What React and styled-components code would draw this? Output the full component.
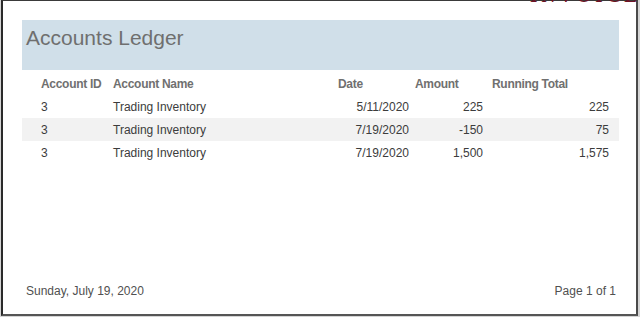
import React from "react";
import styled, { createGlobalStyle } from "styled-components";

const GlobalStyle = createGlobalStyle`
  html, body {
    margin: 0;
    padding: 0;
    background: #d4d4d4;
  }
  body {
    font-family: "Liberation Sans", Arial, sans-serif;
  }
`;

const Page = styled.div`
  position: relative;
  width: 640px;
  height: 317px;
  overflow: hidden;
  background: #d4d4d4;
`;

const Sheet = styled.div`
  box-sizing: border-box;
  margin-left: 1px;
  width: 637px;
  height: 316px;
  background: #ffffff;
  border-left: 2px solid #2a2a2a;
  border-top: 1px solid #3a3a3a;
  border-right: 2px solid #4a4a4a;
  border-bottom: 2px solid #555555;
  padding: 19px 17px 0 19px;
  display: flex;
  flex-direction: column;
`;

// the clipped red caption peeking over the top edge
const TopClip = styled.div`
  position: absolute;
  top: 0;
  left: 530px;
  width: 106px;
  height: 3px;
  overflow: hidden;
`;

const TopText = styled.span`
  position: absolute;
  top: -15px;
  left: 0;
  font-family: "Liberation Serif", serif;
  font-size: 19px;
  font-weight: bold;
  letter-spacing: 4px;
  color: #6e1426;
  white-space: nowrap;
`;

const Band = styled.div`
  height: 50px;
  background: #d0dfe9;
  display: flex;
  align-items: flex-start;
  padding: 4px 0 0 4px;
  box-sizing: border-box;
`;

const Title = styled.h1`
  margin: 0;
  font-size: 21px;
  font-weight: normal;
  color: #6f6f6f;
  line-height: 28px;
`;

const Table = styled.div`
  margin-top: 2px;
  display: flex;
  flex-direction: column;
`;

const Row = styled.div`
  display: grid;
  grid-template-columns: 72px 225px 77px 77px 117px;
  padding-left: 19px;
  height: 23px;
  align-items: center;
  background: ${(p) => (p.$shade ? "#f2f2f2" : "transparent")};
`;

const HeadCell = styled.div`
  font-size: 12px;
  font-weight: bold;
  color: #707070;
  letter-spacing: -0.3px;
  white-space: nowrap;
`;

const Cell = styled.div`
  font-size: 12px;
  color: #3c3c3c;
  white-space: nowrap;
  text-align: ${(p) => (p.$right ? "right" : "left")};
  padding-right: ${(p) => p.$pr || 0}px;
`;

const Footer = styled.div`
  margin-top: auto;
  display: flex;
  justify-content: space-between;
  padding: 0 3px 16px 4px;
  font-size: 12px;
  color: #505050;
  line-height: 14px;
`;

const rows = [
  { id: 3, name: "Trading Inventory", date: "5/11/2020", amount: "225", total: "225" },
  { id: 3, name: "Trading Inventory", date: "7/19/2020", amount: "-150", total: "75" },
  { id: 3, name: "Trading Inventory", date: "7/19/2020", amount: "1,500", total: "1,575" },
];

export default function App() {
  return (
    <Page>
      <GlobalStyle />
      <Sheet>
        <Band>
          <Title>Accounts Ledger</Title>
        </Band>
        <Table>
          <Row>
            <HeadCell>Account ID</HeadCell>
            <HeadCell>Account Name</HeadCell>
            <HeadCell>Date</HeadCell>
            <HeadCell>Amount</HeadCell>
            <HeadCell>Running Total</HeadCell>
          </Row>
          {rows.map((r, i) => (
            <Row key={i} $shade={i % 2 === 1}>
              <Cell>{r.id}</Cell>
              <Cell>{r.name}</Cell>
              <Cell $right $pr={6}>{r.date}</Cell>
              <Cell $right $pr={9}>{r.amount}</Cell>
              <Cell $right>{r.total}</Cell>
            </Row>
          ))}
        </Table>
        <Footer>
          <span>Sunday, July 19, 2020</span>
          <span>Page 1 of 1</span>
        </Footer>
      </Sheet>
      <TopClip>
        <TopText>INVOICE LTD</TopText>
      </TopClip>
    </Page>
  );
}
